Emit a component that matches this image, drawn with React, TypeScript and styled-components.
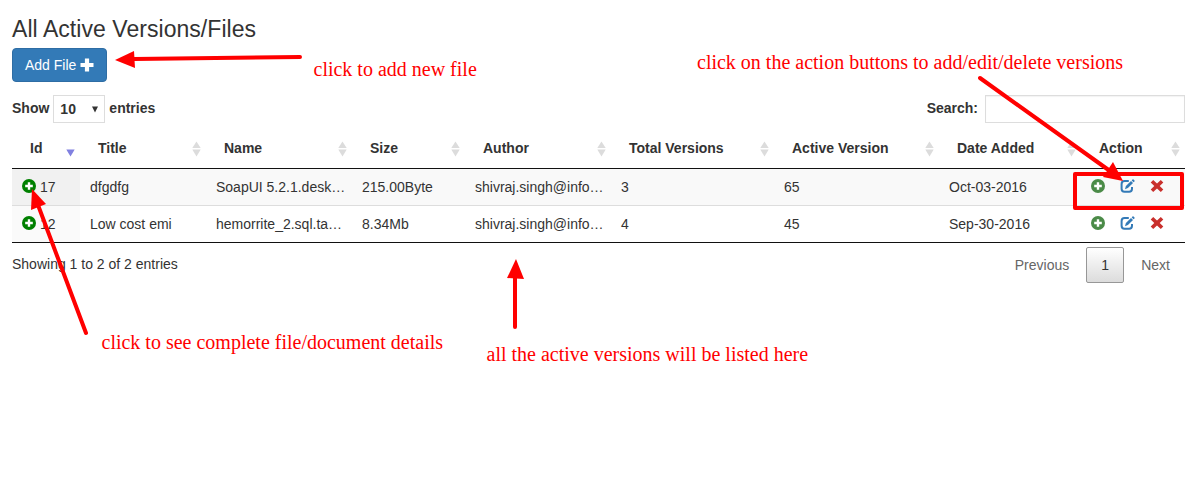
import React from 'react';
import styled, { createGlobalStyle, css } from 'styled-components';

const GlobalStyle = createGlobalStyle`
  * { box-sizing: border-box; }
  body {
    margin: 0;
    background: #fff;
    color: #333;
    font: 14px/20px "Liberation Sans", Arial, sans-serif;
    overflow: hidden;
  }
`;

const Page = styled.main`
  position: relative;
  height: 478px;
  padding: 16px 19px 0 12px;
`;

const Title = styled.h3`
  margin: 0 0 6px;
  font-size: 23px;
  line-height: 26px;
  font-weight: 400;
  letter-spacing: 0.05px;
`;

const AddButton = styled.button`
  display: flex;
  align-items: center;
  gap: 4px;
  width: 95px;
  height: 34px;
  padding: 0 12px;
  border: 1px solid #2e6da4;
  border-radius: 4px;
  background: #337ab7;
  color: #fff;
  font: inherit;
  white-space: nowrap;
`;

const Controls = styled.div`
  display: flex;
  justify-content: space-between;
  margin-top: 13px;
  height: 28px;
  font-weight: 700;
`;

const Control = styled.label<{ $gap: number }>`
  display: flex;
  gap: ${(p) => p.$gap}px;
  line-height: 27px;
`;

const SelectBox = styled.span`
  display: flex;
  align-items: center;
  justify-content: space-between;
  width: 52px;
  height: 28px;
  padding: 0 6px;
  border: 1px solid #ddd;
`;

const SearchInput = styled.input`
  width: 200px;
  height: 28px;
  border: 1px solid #ddd;
  box-shadow: inset 0 1px 1px rgba(0, 0, 0, 0.05);
  outline: none;
`;

const Table = styled.div`
  margin-top: 5px;
  border-bottom: 1px solid #111;
`;

const columns = css`
  display: grid;
  grid-template-columns: 68px 126px 146px 113px 146px 163px 165px 142px 104px;
`;

const HeadRow = styled.div`
  ${columns}
  height: 41px;
  border-bottom: 1px solid #111;
`;

const HeadCell = styled.div`
  display: flex;
  justify-content: space-between;
  padding: 10px 5px 0 18px;
  font-weight: 700;
  white-space: nowrap;
`;

const Row = styled.div<{ $odd: boolean }>`
  ${columns}
  background: ${(p) => (p.$odd ? '#f9f9f9' : '#fff')};
  & + & { border-top: 1px solid #ddd; }
`;

const Cell = styled.div<{ $shade?: string }>`
  height: 36px;
  padding: 8px 10px;
  white-space: nowrap;
  background: ${(p) => p.$shade ?? 'transparent'};
`;

const IdCell = styled(Cell)`
  display: flex;
  gap: 4px;
`;

const ActionCell = styled(Cell)`
  display: flex;
  gap: 15px;
`;

const Icon = styled.svg<{ $top?: number }>`
  flex: none;
  display: block;
  margin-top: ${(p) => p.$top ?? 0}px;
`;

const Footer = styled.div`
  display: flex;
  justify-content: space-between;
  padding-top: 4px;
`;

const Info = styled.div`
  padding-top: 7px;
`;

const Pager = styled.div`
  display: flex;
  margin-right: -1px;
`;

const PageLink = styled.span<{ $current?: boolean }>`
  height: 36px;
  padding: 8px 16px;
  color: #666;
  ${(p) => p.$current && css`
    width: 38px;
    margin: 0 1px;
    padding: 7px 0;
    text-align: center;
    color: #333;
    border: 1px solid #979797;
    border-radius: 2px;
    background: linear-gradient(#fff, #dcdcdc);
  `}
`;

const Overlay = styled.svg`
  position: absolute;
  inset: 0;
  pointer-events: none;
`;

const Note = styled.span<{ $x: number; $y: number }>`
  position: absolute;
  left: ${(p) => p.$x}px;
  top: ${(p) => p.$y}px;
  color: #f00;
  font: 20px/24px "Liberation Serif", "Times New Roman", serif;
  white-space: nowrap;
`;

const PlusCircle = ({ color }: { color: string }) => (
  <Icon width="14" height="14" viewBox="0 0 14 14" $top={2}>
    <circle cx="7" cy="7" r="7" fill={color} />
    <path d="M5.800 3.200h2.400v2.600h2.600v2.400H8.200v2.600H5.800V8.200H3.200V5.800h2.600z" fill="#fff" />
  </Icon>
);

const EditIcon = () => (
  <Icon width="15" height="14" viewBox="0 0 15 14" $top={2}>
    <path d="M8.800 2H4.500Q1.600 2 1.600 4.900v4.900q0 2.900 2.900 2.900h4.600q2.900 0 2.900-2.900V8" fill="none" stroke="#337ab7" strokeWidth="2" />
    <path d="M5 10.200 5.900 7.100 11 2 13 4 7.900 9.100z" fill="#337ab7" />
    <path d="M11.700 1.400 13 .1 14.900 2 13.600 3.300z" fill="#337ab7" />
  </Icon>
);

const RemoveIcon = () => (
  <Icon width="14" height="14" viewBox="0 0 14 14" $top={2}>
    <path d="M3.200 1 7 4.500 10.800 1 13.300 3.500 9.700 7 13.300 10.500 10.800 13 7 9.500 3.200 13 .7 10.500 4.300 7 .7 3.500z" fill="#c9302c" />
  </Icon>
);

const SortIcon = ({ active }: { active: boolean }) => (
  <Icon width="9" height="16" viewBox="0 0 9 16" $top={2.500}>
    {!active && <path d="M4.500.5 8.700 7H.3z" fill="#dcdcdc" />}
    <path d="M.3 8.500h8.400L4.500 15.500z" fill={active ? '#8080e0' : '#dcdcdc'} />
  </Icon>
);

const headings = ['Id', 'Title', 'Name', 'Size', 'Author', 'Total Versions', 'Active Version', 'Date Added', 'Action'];

const rows = [
  { id: '17', cells: ['dfgdfg', 'SoapUI 5.2.1.desk…', '215.00Byte', 'shivraj.singh@info…', '3', '65', 'Oct-03-2016'] },
  { id: '12', cells: ['Low cost emi', 'hemorrite_2.sql.ta…', '8.34Mb', 'shivraj.singh@info…', '4', '45', 'Sep-30-2016'] },
];

export default function App() {
  return (
    <Page>
      <GlobalStyle />
      <Title>All Active Versions/Files</Title>
      <AddButton>
        Add File
        <Icon width="14" height="14" viewBox="0 0 14 14">
          <path d="M4.900.5h4.200v4.400h4.400v4.200H9.100v4.400H4.900V9.100H.5V4.900h4.400z" fill="#fff" />
        </Icon>
      </AddButton>
      <Controls>
        <Control $gap={4}>
          Show
          <SelectBox>
            10
            <Icon width="6" height="7" viewBox="0 0 6 7">
              <path d="M0 .5h6L3 6.500z" fill="#333" />
            </Icon>
          </SelectBox>
          entries
        </Control>
        <Control $gap={7}>
          Search:
          <SearchInput />
        </Control>
      </Controls>
      <Table>
        <HeadRow>
          {headings.map((h, i) => (
            <HeadCell key={h}>
              {h}
              <SortIcon active={i === 0} />
            </HeadCell>
          ))}
        </HeadRow>
        {rows.map((r, i) => (
          <Row key={r.id} $odd={i === 0}>
            <IdCell $shade={i === 0 ? '#f1f1f1' : '#fafafa'}>
              <PlusCircle color="#008000" />
              {r.id}
            </IdCell>
            {r.cells.map((c) => (
              <Cell key={c}>{c}</Cell>
            ))}
            <ActionCell>
              <PlusCircle color="#4b8b48" />
              <EditIcon />
              <RemoveIcon />
            </ActionCell>
          </Row>
        ))}
      </Table>
      <Footer>
        <Info>Showing 1 to 2 of 2 entries</Info>
        <Pager>
          <PageLink>Previous</PageLink>
          <PageLink $current>1</PageLink>
          <PageLink>Next</PageLink>
        </Pager>
      </Footer>
      <Overlay width="1204" height="478" viewBox="0 0 1204 478">
        <g stroke="#f00" strokeWidth="4" strokeLinecap="round" fill="none">
          <path d="M300 57 134 59" />
          <path d="M980 78 1110 171" />
          <path d="M86 333 38 205" />
          <path d="M515 327V277" />
          <rect x="1075" y="174" width="107" height="34" strokeLinejoin="round" />
        </g>
        <g fill="#f00">
          <path d="M115 60 134 51 135 68z" />
          <path d="M1123 181 1113 162 1103 177z" />
          <path d="M32 189 31 210 46 204z" />
          <path d="M516 259 507 278 524 279z" />
        </g>
      </Overlay>
      <Note $x={313.5} $y={57}>click to add new file</Note>
      <Note $x={697} $y={50}>click on the action buttons to add/edit/delete versions</Note>
      <Note $x={101.5} $y={330}>click to see complete file/document details</Note>
      <Note $x={486.5} $y={342}>all the active versions will be listed here</Note>
    </Page>
  );
}
